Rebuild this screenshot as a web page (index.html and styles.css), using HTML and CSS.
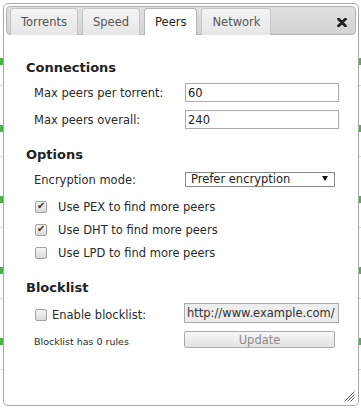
FILE: index.html
```html
<!DOCTYPE html>
<html lang="en">
<head>
  <meta charset="UTF-8">
  <meta name="viewport" content="width=device-width, initial-scale=1.0">
  <title>Preferences</title>
  <link rel="stylesheet" href="styles.css">
</head>
<body>

  <div class="torrent-list">
    <div class="torrent"><div class="progress"></div></div>
    <div class="torrent"><div class="progress"></div></div>
    <div class="torrent"><div class="progress"></div></div>
    <div class="torrent"><div class="progress"></div></div>
    <div class="torrent"><div class="progress"></div></div>
  </div>

  <div class="dialog">
    <ul class="tabs">
      <li class="tab">Torrents</li>
      <li class="tab">Speed</li>
      <li class="tab active">Peers</li>
      <li class="tab">Network</li>
      <li class="close">
        <svg width="10" height="9" viewBox="0 0 10 9">
          <path d="M1.5 1 L8.5 8 M8.5 1 L1.5 8" stroke="#222" stroke-width="2.8" stroke-linecap="round"/>
        </svg>
      </li>
    </ul>

    <div class="content">
      <div class="section first">
        <h3>Connections</h3>
        <div class="row">
          <label for="peersTorrent">Max peers per torrent:</label>
          <input type="text" id="peersTorrent" class="text" value="60">
        </div>
        <div class="row">
          <label for="peersGlobal">Max peers overall:</label>
          <input type="text" id="peersGlobal" class="text" value="240">
        </div>
      </div>

      <div class="section">
        <h3>Options</h3>
        <div class="row">
          <label for="encryption">Encryption mode:</label>
          <div class="select-wrap">
            <select id="encryption">
              <option>Prefer encryption</option>
              <option>Require encryption</option>
              <option>Allow encryption</option>
            </select>
          </div>
        </div>
        <div class="row check-row">
          <input type="checkbox" id="pex" checked>
          <label for="pex">Use PEX to find more peers</label>
        </div>
        <div class="row check-row">
          <input type="checkbox" id="dht" checked>
          <label for="dht">Use DHT to find more peers</label>
        </div>
        <div class="row check-row">
          <input type="checkbox" id="lpd">
          <label for="lpd">Use LPD to find more peers</label>
        </div>
      </div>

      <div class="section">
        <h3>Blocklist</h3>
        <div class="row block-row">
          <div class="enable">
            <input type="checkbox" id="blocklist">
            <label for="blocklist">Enable blocklist:</label>
          </div>
          <input type="text" class="text url" value="http://www.example.com/" disabled>
        </div>
        <div class="row info-row">
          <span class="rules">Blocklist has 0 rules</span>
          <button disabled>Update</button>
        </div>
      </div>
    </div>

    <svg class="grip" width="11" height="11" viewBox="0 0 11 11">
      <path d="M10.5 0.5 L0.5 10.5 M10.5 3.5 L3.5 10.5 M10.5 6.5 L6.5 10.5" stroke="#555" stroke-width="1"/>
    </svg>
  </div>

</body>
</html>
```

FILE: styles.css
```css
/* Generelt */
body {
  margin: 0;
  height: 409px;
  overflow: hidden;
  position: relative;
  background: #fff;
  color: #2a2a2a;
  font-family: "DejaVu Sans", Verdana, sans-serif;
  font-size: 11.5px;
}

/* Torrentlisten bak dialogen */
.torrent {
  padding: 39px 0 24px;
  border-bottom: 1px solid #d8d8d8;
}
.torrent:first-child {
  padding: 58px 0 20px;
}
.progress {
  height: 7px;
  background: #48b448;
}

/* Dialog */
.dialog {
  position: absolute;
  left: 3px;
  top: 3px;
  width: 356px;
  height: 403px;
  box-sizing: border-box;
  padding: 2px;
  border: 1px solid #a8a8a8;
  border-radius: 5px;
  background: #fff;
}

.tabs {
  display: flex;
  align-items: flex-end;
  height: 29px;
  box-sizing: border-box;
  margin: 0;
  padding: 1px 3px 0;
  list-style: none;
  border: 1px solid #b4b4b4;
  border-radius: 4px;
  background: linear-gradient(#e0e0e0, #d3d3d3);
}
.tab {
  height: 27px;
  box-sizing: border-box;
  margin: 0 4px -1px 0;
  padding: 1px 10px 0;
  border: 1px solid #c4c4c4;
  border-bottom: none;
  border-radius: 4px 4px 0 0;
  background: linear-gradient(#f4f4f4, #e6e6e6);
  color: #555;
  line-height: 24px;
}
.tab.active {
  background: #fff;
  border-color: #b4b4b4;
  color: #222;
}
.close {
  align-self: flex-start;
  margin: 10px 5px 0 auto;
  line-height: 0;
}

/* Innhold */
.content {
  padding-left: 20px;
}
.section {
  margin-top: 18px;
}
.section.first {
  margin-top: 25px;
}
h3 {
  margin: 0 0 7px;
  font-size: 13px;
  line-height: 16px;
  font-weight: bold;
  color: #222;
}

.row {
  display: grid;
  grid-template-columns: 151px auto;
  align-items: center;
  height: 19px;
  margin: 0 0 8px 8px;
}

input.text {
  width: 154px;
  height: 19px;
  box-sizing: border-box;
  margin: 0;
  padding: 0 2px;
  border: 1px solid #ababab;
  font-family: inherit;
  font-size: 11.5px;
  color: #222;
  background: #fff;
}
input.url {
  width: 155px;
  height: 20px;
  margin-left: -1px;
  background: #ededed;
  color: #333;
}

.select-wrap {
  position: relative;
  width: 150px;
  height: 15px;
}
.select-wrap select {
  appearance: none;
  width: 150px;
  height: 15px;
  box-sizing: border-box;
  margin: 0;
  padding: 0 0 0 5px;
  border: 1px solid #8a8a8a;
  border-radius: 0;
  background: #fff;
  font-family: inherit;
  font-size: 11.5px;
  line-height: 13px;
  color: #222;
}
.select-wrap::after {
  content: "";
  position: absolute;
  right: 7px;
  top: 4px;
  border-left: 3px solid transparent;
  border-right: 3px solid transparent;
  border-top: 5px solid #111;
  pointer-events: none;
}

/* Avkrysningsbokser */
input[type="checkbox"] {
  appearance: none;
  position: relative;
  width: 12px;
  height: 12px;
  box-sizing: border-box;
  margin: 0 0 0 1px;
  border: 1px solid #a2a2a2;
  border-radius: 2px;
  background: linear-gradient(#f6f6f6, #d9d9d9);
}
input[type="checkbox"]:checked::after {
  content: "\2714";
  position: absolute;
  left: 1px;
  top: -2px;
  font-size: 10px;
  line-height: 12px;
  color: #333;
}
.check-row {
  display: flex;
  gap: 11px;
  margin-bottom: 4px;
}

.block-row {
  height: 20px;
}
.enable {
  display: flex;
  align-items: center;
  gap: 5px;
  align-self: end;
  height: 14px;
  margin-bottom: 1px;
}
.info-row {
  height: 17px;
}
.rules {
  align-self: end;
  font-size: 9.5px;
  line-height: 12px;
}
button {
  width: 151px;
  height: 17px;
  margin-left: -1px;
  padding: 0;
  border: 1px solid #ababab;
  border-radius: 2px;
  background: linear-gradient(#f7f7f7, #e2e2e2);
  font-family: inherit;
  font-size: 11.5px;
  color: #8a8a8a;
}

.grip {
  position: absolute;
  right: 3px;
  bottom: 3px;
}
```
